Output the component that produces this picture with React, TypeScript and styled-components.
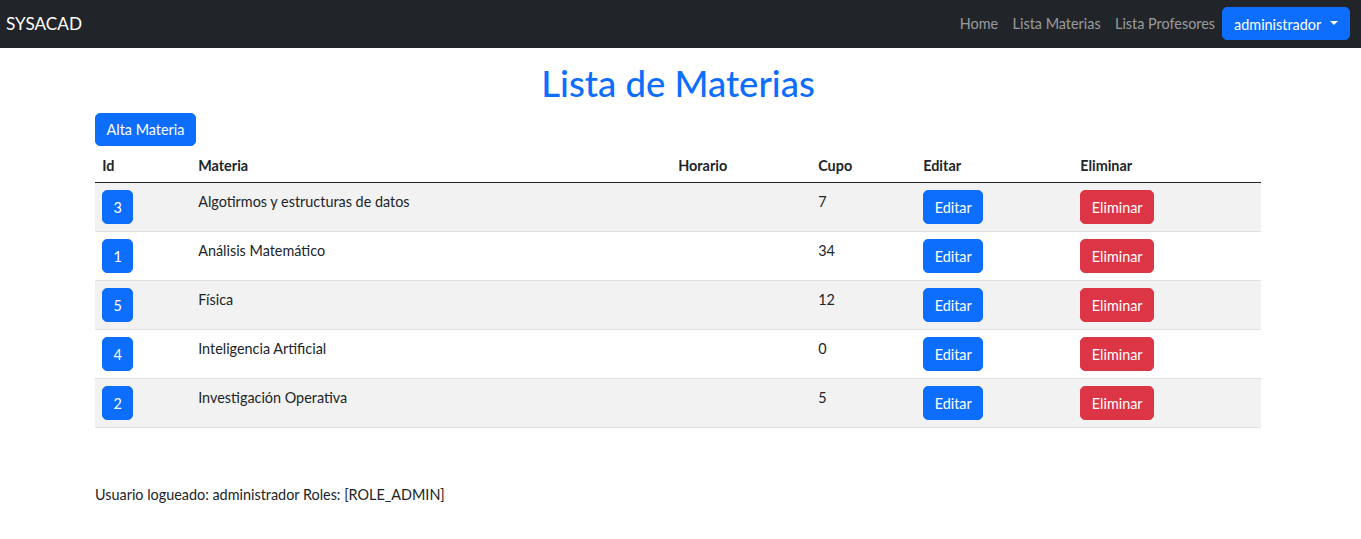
import React from "react";
import styled, { createGlobalStyle } from "styled-components";

const Global = createGlobalStyle`
  * { box-sizing: border-box; }
  body {
    margin: 0;
    font-family: Lato, "Noto Sans", sans-serif;
    font-size: 14.4px;
    line-height: 1.5;
    color: #212529;
    background: #fff;
  }
`;

const Navbar = styled.nav`
  height: 48px;
  background: #212529;
  display: flex;
  align-items: center;
  justify-content: space-between;
  padding: 0 11px 0 6px;
`;

const Brand = styled.a`
  color: #fff;
  font-size: 17.2px;
  text-decoration: none;
`;

const NavRight = styled.div`
  display: flex;
  align-items: center;
`;

const NavLink = styled.a`
  color: rgba(255, 255, 255, 0.55);
  padding: 7px 7.2px;
  text-decoration: none;
`;

const Btn = styled.button<{ $variant?: "primary" | "danger"; $w?: number; $h?: number }>`
  font-family: inherit;
  font-size: 14.4px;
  line-height: 1.5;
  color: #fff;
  background: ${(p) => (p.$variant === "danger" ? "#dc3545" : "#0d6efd")};
  border: 1px solid ${(p) => (p.$variant === "danger" ? "#dc3545" : "#0d6efd")};
  border-radius: 5px;
  padding: 2px 10.8px 0;
  height: ${(p) => p.$h ?? 34}px;
  white-space: nowrap;
  display: inline-flex;
  align-items: center;
  justify-content: center;
  ${(p) => (p.$w ? `width: ${p.$w}px;` : "")}
  cursor: pointer;
`;

const Caret = styled.span`
  display: inline-block;
  margin-left: 9px;
  border-top: 4.5px solid #fff;
  border-left: 4.5px solid transparent;
  border-right: 4.5px solid transparent;
  transform: translateY(-2px);
`;

const Container = styled.main`
  width: 1166px;
  margin-left: 95px;
`;

const Title = styled.h1`
  margin: 14px 0 7px;
  text-align: center;
  color: #0d6efd;
  font-size: 36.5px;
  font-weight: 500;
  line-height: 1.2;
`;

const Table = styled.table`
  width: 100%;
  border-collapse: collapse;
  margin-bottom: 14.4px;
`;

const Th = styled.th<{ $w: number }>`
  width: ${(p) => p.$w}px;
  text-align: left;
  font-weight: 700;
  padding: 9px 7.2px 5.4px;
  border-bottom: 1px solid #212529;
`;

const Tr = styled.tr<{ $striped: boolean }>`
  background: ${(p) => (p.$striped ? "#f2f2f2" : "#fff")};
  border-bottom: 1px solid #dee2e6;
`;

const Td = styled.td`
  padding: 7px 7.2px;
  vertical-align: top;
`;

const TextCell = styled(Td)`
  padding-top: 8px;
`;

const Footer = styled.p`
  margin: 56px 0 0;
`;

const materias = [
  { id: 3, nombre: "Algotirmos y estructuras de datos", cupo: 7 },
  { id: 1, nombre: "Análisis Matemático", cupo: 34 },
  { id: 5, nombre: "Física", cupo: 12 },
  { id: 4, nombre: "Inteligencia Artificial", cupo: 0 },
  { id: 2, nombre: "Investigación Operativa", cupo: 5 },
];

export default function App() {
  return (
    <>
      <Global />
      <Navbar>
        <Brand href="#">SYSACAD</Brand>
        <NavRight>
          <NavLink href="#">Home</NavLink>
          <NavLink href="#">Lista Materias</NavLink>
          <NavLink href="#">Lista Profesores</NavLink>
          <Btn $h={33}>
            administrador
            <Caret />
          </Btn>
        </NavRight>
      </Navbar>
      <Container>
        <Title>Lista de Materias</Title>
        <Btn $w={101} $h={33}>Alta Materia</Btn>
        <Table>
          <thead>
            <tr>
              <Th $w={96}>Id</Th>
              <Th $w={480}>Materia</Th>
              <Th $w={140}>Horario</Th>
              <Th $w={105}>Cupo</Th>
              <Th $w={157}>Editar</Th>
              <Th $w={188}>Eliminar</Th>
            </tr>
          </thead>
          <tbody>
            {materias.map((m, i) => (
              <Tr key={m.id} $striped={i % 2 === 0}>
                <Td>
                  <Btn $w={31}>{m.id}</Btn>
                </Td>
                <TextCell>{m.nombre}</TextCell>
                <TextCell></TextCell>
                <TextCell>{m.cupo}</TextCell>
                <Td>
                  <Btn $w={60}>Editar</Btn>
                </Td>
                <Td>
                  <Btn $variant="danger" $w={74}>Eliminar</Btn>
                </Td>
              </Tr>
            ))}
          </tbody>
        </Table>
        <Footer>Usuario logueado: administrador Roles: [ROLE_ADMIN]</Footer>
      </Container>
    </>
  );
}
